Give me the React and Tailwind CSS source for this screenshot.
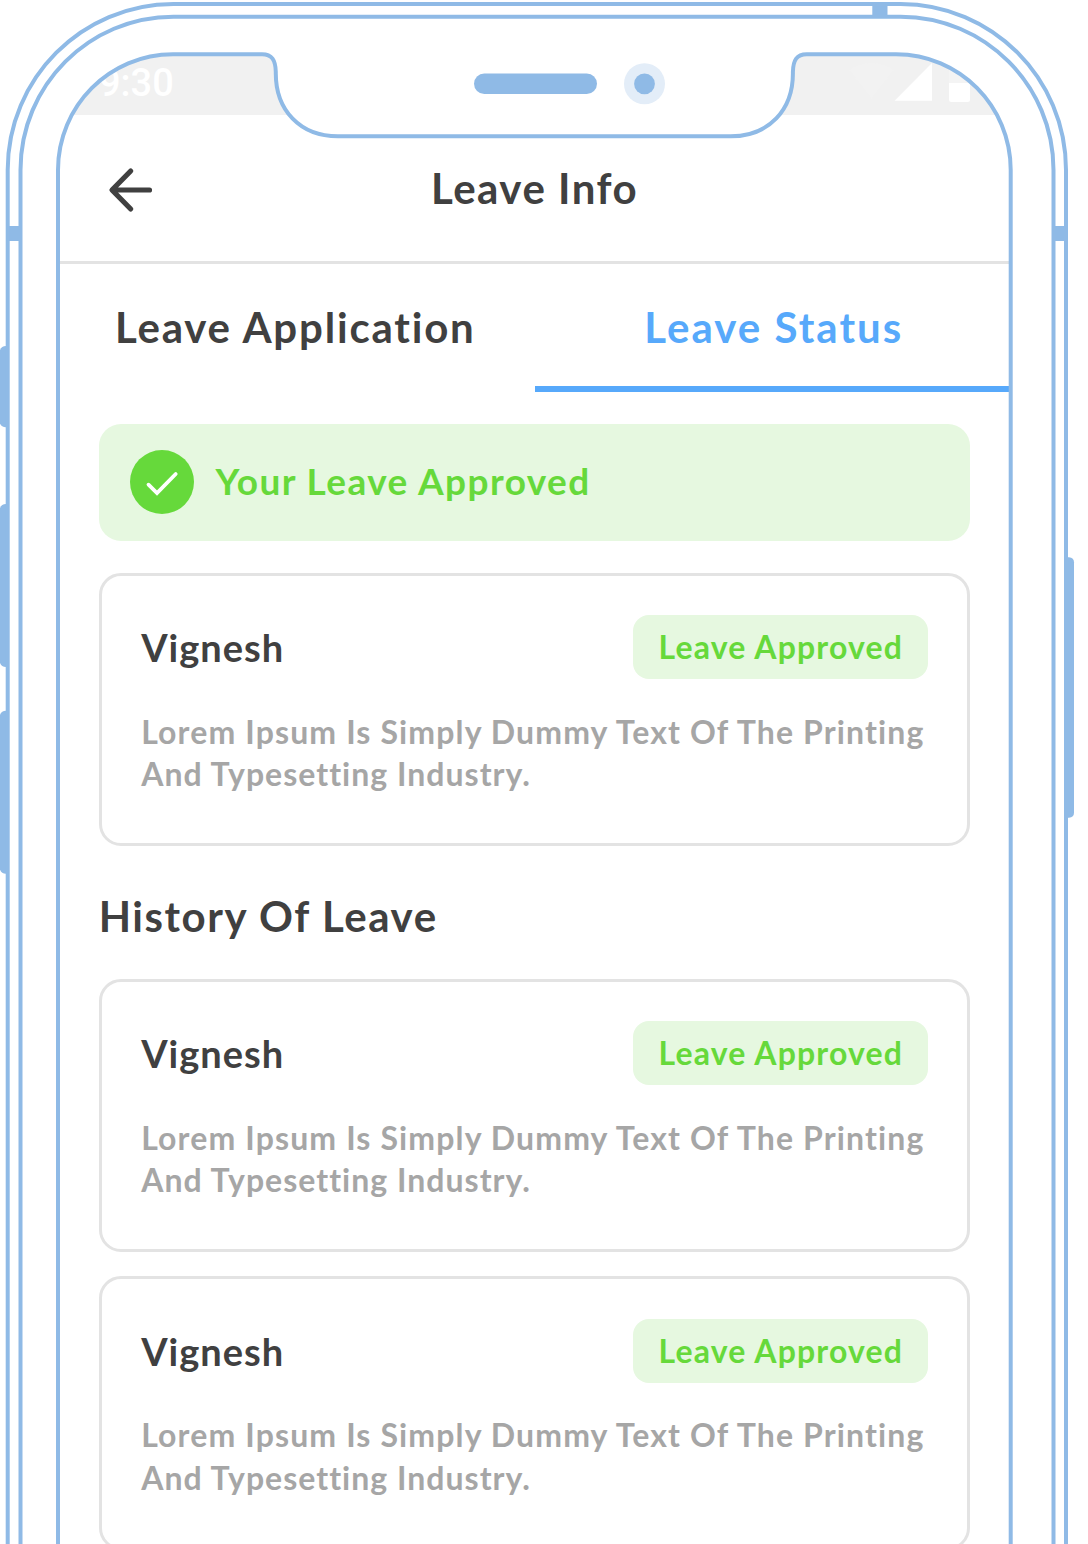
const frameStroke = "#8fbae6";

const screenPath =
  "M58 1600 V170 C58 106 109.500 54.300 173 54.300 H262 C272 54.300 275.500 60 275.800 72 C275.200 110 300 136.300 338 136.300 H730.700 C768.700 136.300 793.500 110 792.900 72 C793.200 60 796.700 54.300 806.700 54.300 H896 C959.500 54.300 1010.700 106 1010.700 170 V1600";

function DeviceFrame() {
  return (
    <svg
      className="pointer-events-none absolute inset-0"
      width="1088"
      height="1544"
      viewBox="0 0 1088 1544"
      fill="none"
      aria-hidden="true"
    >
      <path d={`M-10 1600 V-10 H1100 V1600 Z ${screenPath} Z`} fill="#fff" fillRule="evenodd" />
      <g fill={frameStroke}>
        <path d="M0 350 Q1.500 346 6 346 H8 V427.300 H6 Q1.500 427.300 0 423.500 Z" />
        <path d="M0 508 Q1.500 504 6 504 H8 V667 H6 Q1.500 667 0 663 Z" />
        <path d="M0 714.700 Q1.500 710.700 6 710.700 H8 V873.700 H6 Q1.500 873.700 0 869.700 Z" />
        <path d="M1066 557.300 H1069 Q1074 557.800 1074 562.300 V812.800 Q1074 817.300 1069 817.800 H1066 Z" />
        <rect x="8" y="226" width="12" height="15" />
        <rect x="1054" y="226" width="12" height="15" />
        <rect x="872.300" y="4" width="15.200" height="12" />
        <rect x="474" y="73.500" width="123" height="20.500" rx="10.250" />
      </g>
      <circle cx="644.500" cy="83.800" r="20.500" fill="#e3edf8" />
      <circle cx="644.500" cy="83.800" r="10.400" fill={frameStroke} />
      <g stroke={frameStroke} strokeWidth="4">
        <path d="M7.700 1600 V170 C7.700 78.500 82 4 173.500 4 H900.500 C992 4 1066 78.500 1066 170 V1600" />
        <path d="M20.500 1600 V170 C20.500 85.500 89 16.700 173.500 16.700 H900.500 C985 16.700 1053.500 85.500 1053.500 170 V1600" />
        <path d={screenPath} />
      </g>
    </svg>
  );
}

function StatusBar() {
  return (
    <div className="flex h-[60px] items-start justify-between bg-[#f1f1f1] pl-[39px] pr-[38px]">
      <span className="mt-[5px] font-[Roboto,sans-serif] text-[38px] leading-[46px] font-medium text-white">9:30</span>
      <svg className="mt-[8px]" width="122" height="40" viewBox="0 0 122 40">
        <path d="M0 7 Q22.500 -7 45 7 L22.500 36 Z" fill="#f2f2f2" />
        <path d="M45.500 37.700 L83 0 V37.700 Z" fill="#fff" />
        <path d="M100 7 h21 v14 h-21 z" fill="#f4f4f4" />
        <path d="M100 20 h21 v16.500 q0 2.500 -2.500 2.500 h-16 q-2.500 0 -2.500 -2.500 z" fill="#fff" />
      </svg>
    </div>
  );
}

function LeaveCard() {
  return (
    <article className="h-[273.500px] rounded-[22px] border-[3px] border-[#e3e3e3] pt-[39.500px] pr-[39.500px] pl-[39.500px]">
      <div className="flex items-center justify-between">
        <h3 className="text-[38px] leading-[64px] font-bold tracking-[1px] whitespace-nowrap text-[#404040]">Vignesh</h3>
        <span className="flex h-[64px] w-[295px] items-center justify-center rounded-[16px] bg-[#e6f8e0] pl-[1px] text-[32px] font-bold tracking-[1.150px] whitespace-nowrap text-[#66d93b]">
          Leave Approved
        </span>
      </div>
      <p className="mt-[31.500px] text-[32px] leading-[42.700px] font-bold whitespace-nowrap text-[#a6a6a6]">
        <span className="tracking-[1.130px]">Lorem Ipsum Is Simply Dummy Text Of The Printing</span>
        <br />
        <span className="tracking-[1.020px]">And Typesetting Industry.</span>
      </p>
    </article>
  );
}

export default function App() {
  return (
    <div className="relative h-[1544px] w-[1088px] overflow-hidden bg-white font-[Lato,sans-serif] text-[#404040]">
      <main className="mx-[60px] w-[949px] pt-[55px]">
        <StatusBar />
        <header className="grid h-[149px] grid-cols-[1fr_auto_1fr] items-center border-b-[3px] border-[#e3e3e3] pl-[48px] pr-[48px]">
          <svg className="mt-[3px]" width="46" height="46" viewBox="0 0 46 46" fill="none" stroke="#404040" strokeWidth="5.200" strokeLinecap="round" strokeLinejoin="round">
            <path d="M22.700 4 L4 23 L22.700 42 M5 23 H41.500" />
          </svg>
          <h1 className="text-[42px] leading-[56px] font-bold tracking-[1.500px] whitespace-nowrap">Leave Info</h1>
        </header>
        <nav className="grid h-[128px] grid-cols-2 text-center text-[42px] leading-[56px] font-bold whitespace-nowrap">
          <span className="pt-[35px] pr-[4px] tracking-[1.800px]">Leave Application</span>
          <span className="border-b-[6px] border-[#57a9fb] pt-[35px] pl-[4px] tracking-[2.050px] text-[#57a9fb]">Leave Status</span>
        </nav>
        <div className="mx-[38.700px]">
          <div className="mt-[31.500px] flex h-[117px] items-center gap-[21px] rounded-[22px] bg-[#e6f8e0] pl-[31.800px]">
            <svg width="64" height="64" viewBox="0 0 64 64" fill="none">
              <circle cx="32" cy="32" r="32" fill="#66d93b" />
              <path d="M18.500 34.700 L27 43 L45.700 24" stroke="#fff" strokeWidth="3.800" strokeLinecap="round" />
            </svg>
            <span className="pb-[2px] text-[37px] leading-[50px] font-bold tracking-[1.430px] whitespace-nowrap text-[#66d93b]">Your Leave Approved</span>
          </div>
          <div className="mt-[32px]">
            <LeaveCard />
          </div>
          <h2 className="mt-[42px] text-[42px] leading-[56px] font-bold tracking-[1.570px] whitespace-nowrap">History Of Leave</h2>
          <div className="mt-[34.500px] flex flex-col gap-[24px]">
            <LeaveCard />
            <LeaveCard />
          </div>
        </div>
      </main>
      <DeviceFrame />
    </div>
  );
}
